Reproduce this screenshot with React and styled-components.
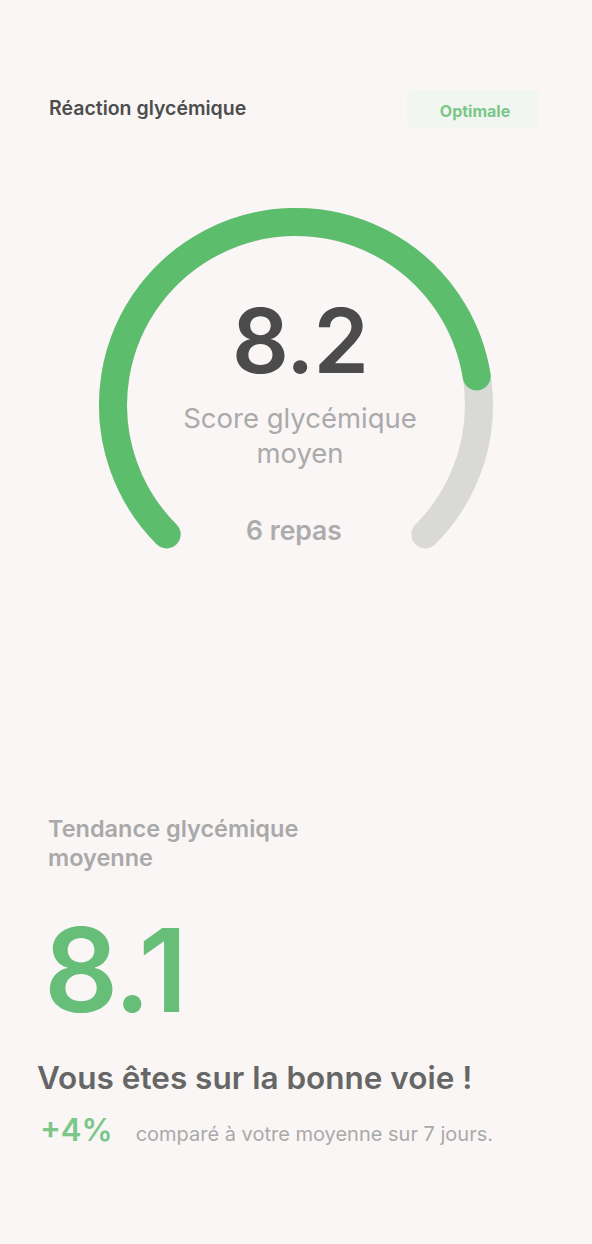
import React from "react";
import styled, { createGlobalStyle } from "styled-components";

const GlobalStyle = createGlobalStyle`
  html, body {
    margin: 0;
    padding: 0;
    background: #f9f6f5;
    font-family: Inter, "Noto Sans", sans-serif;
  }
`;

const Page = styled.div`
  width: 592px;
  min-height: 1244px;
  background: #f9f6f5;
  display: flex;
  flex-direction: column;
`;

const Header = styled.div`
  display: flex;
  justify-content: space-between;
  align-items: center;
  padding: 90px 53px 0 49px;
`;

const Title = styled.div`
  margin-top: -3px;
  font-size: 19.5px;
  font-weight: 600;
  color: #4d4d4d;
`;

const Badge = styled.div`
  width: 132px;
  height: 38px;
  display: flex;
  align-items: center;
  justify-content: center;
  padding: 4px 0 0 4px;
  box-sizing: border-box;
  background: #f1f7f0;
  border-radius: 4px;
  color: #7cc68a;
  font-size: 16px;
  font-weight: 700;
`;

const GaugeWrap = styled.div`
  align-self: center;
  display: grid;
  width: 400px;
  height: 360px;
  margin-top: 77px;
  & > * {
    grid-area: 1 / 1;
  }
`;

const GaugeText = styled.div`
  display: flex;
  flex-direction: column;
  align-items: center;
  padding: 91px 0 0 8px;
`;

const Score = styled.div`
  font-size: 89px;
  font-weight: 600;
  line-height: 1;
  color: #4b4b4b;
  letter-spacing: -1px;
`;

const ScoreLabel = styled.div`
  margin-top: 16px;
  font-size: 27.5px;
  line-height: 35px;
  color: #aaaaaa;
  text-align: center;
  width: 280px;
`;

const Meals = styled.div`
  margin: 43px 0 0 -12px;
  font-size: 26.5px;
  font-weight: 600;
  color: #acacac;
`;

const Trend = styled.div`
  display: flex;
  flex-direction: column;
  padding: 249px 0 0 48px;
`;

const TrendTitle = styled.div`
  width: 290px;
  font-size: 23.5px;
  font-weight: 600;
  line-height: 29px;
  color: #a9a9a9;
`;

const BigValue = styled.div`
  margin: 40px 0 0 -4px;
  font-size: 116px;
  font-weight: 600;
  line-height: 1;
  color: #66be78;
  letter-spacing: -2px;
`;

const Message = styled.div`
  margin: 30px 0 0 -11px;
  font-size: 31.5px;
  font-weight: 600;
  color: #666666;
`;

const CompareRow = styled.div`
  display: flex;
  align-items: baseline;
  gap: 23px;
  margin: 14px 0 0 -8px;
`;

const Delta = styled.span`
  font-size: 31px;
  font-weight: 600;
  color: #7cc68a;
`;

const CompareText = styled.span`
  font-size: 20px;
  color: #aaaaaa;
`;

const CX = 200;
const CY = 200;
const R = 183;
const START = -135;
const SWEEP = 270;

function polar(deg) {
  const rad = ((deg - 90) * Math.PI) / 180;
  return [CX + R * Math.cos(rad), CY + R * Math.sin(rad)];
}

function arc(from, to) {
  const [x1, y1] = polar(from);
  const [x2, y2] = polar(to);
  const large = to - from > 180 ? 1 : 0;
  return `M ${x1} ${y1} A ${R} ${R} 0 ${large} 1 ${x2} ${y2}`;
}

const Gauge = ({ ratio }) => {
  const end = START + SWEEP * ratio;
  return (
    <svg width="400" height="360" viewBox="0 0 400 360">
      <path d={arc(START, START + SWEEP)} fill="none" stroke="#d9dad7" strokeWidth="28" strokeLinecap="round" />
      <path d={arc(START, end)} fill="none" stroke="#5cbd6c" strokeWidth="28" strokeLinecap="round" />
    </svg>
  );
};

export default function App() {
  return (
    <Page>
      <GlobalStyle />
      <Header>
        <Title>Réaction glycémique</Title>
        <Badge>Optimale</Badge>
      </Header>
      <GaugeWrap>
        <Gauge ratio={0.8} />
        <GaugeText>
          <Score>8.2</Score>
          <ScoreLabel>Score glycémique moyen</ScoreLabel>
          <Meals>6 repas</Meals>
        </GaugeText>
      </GaugeWrap>
      <Trend>
        <TrendTitle>Tendance glycémique moyenne</TrendTitle>
        <BigValue>8.1</BigValue>
        <Message>Vous êtes sur la bonne voie !</Message>
        <CompareRow>
          <Delta>+4%</Delta>
          <CompareText>comparé à votre moyenne sur 7 jours.</CompareText>
        </CompareRow>
      </Trend>
    </Page>
  );
}
